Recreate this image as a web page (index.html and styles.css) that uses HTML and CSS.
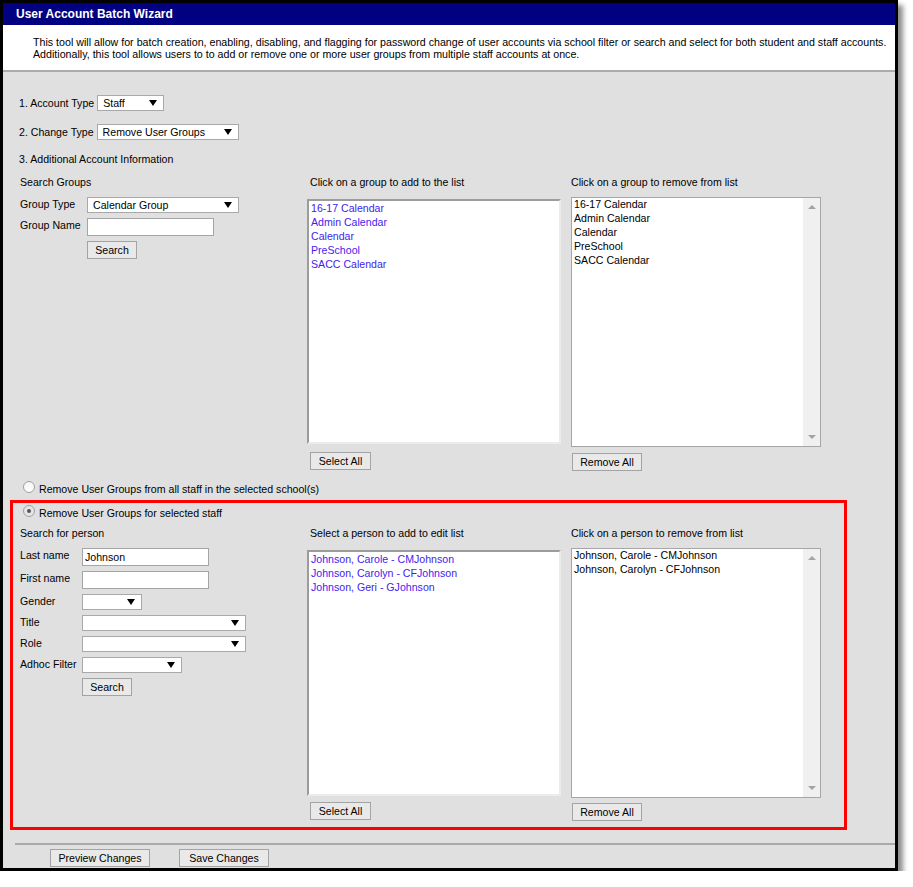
FILE: index.html
```html
<!DOCTYPE html>
<html>
<head>
<meta charset="utf-8">
<link rel="stylesheet" href="styles.css">
</head>
<body>
<div class="frame">
  <div class="titlebar">User Account Batch Wizard</div>
  <div class="desc">This tool will allow for batch creation, enabling, disabling, and flagging for password change of user accounts via school filter or search and select for both student and staff accounts.<br>Additionally, this tool allows users to to add or remove one or more user groups from multiple staff accounts at once.</div>
  <div class="main">
    <div class="row r1"><span class="rlbl">1. Account Type</span><div class="sel w-acct">Staff<span class="arr"></span></div></div>
    <div class="row r2"><span class="rlbl">2. Change Type</span><div class="sel w-change">Remove User Groups<span class="arr"></span></div></div>
    <div class="row r3">3. Additional Account Information</div>

    <div class="cols groups">
      <div class="c1">
        <div class="head">Search Groups</div>
        <div class="field f-first"><span class="flbl gl">Group Type</span><div class="sel w-gtype">Calendar Group<span class="arr"></span></div></div>
        <div class="field f-next"><span class="flbl gl">Group Name</span><div class="inp w-gname"></div></div>
        <div class="btnrow g-btn"><button class="btn w-search">Search</button></div>
      </div>
      <div class="c2">
        <div class="head">Click on a group to add to the list</div>
        <div class="list inset glist">
          <div class="item">16-17 Calendar</div>
          <div class="item">Admin Calendar</div>
          <div class="item">Calendar</div>
          <div class="item">PreSchool</div>
          <div class="item">SACC Calendar</div>
        </div>
        <button class="btn w-selall sel-btn">Select All</button>
      </div>
      <div class="c3">
        <div class="head">Click on a group to remove from list</div>
        <div class="list plain">
          <div class="items">
            <div class="item">16-17 Calendar</div>
            <div class="item">Admin Calendar</div>
            <div class="item">Calendar</div>
            <div class="item">PreSchool</div>
            <div class="item">SACC Calendar</div>
          </div>
          <div class="track"><span class="up"></span><span class="down"></span></div>
        </div>
        <button class="btn w-remall rem-btn">Remove All</button>
      </div>
    </div>

    <div class="radiorow rr-all"><span class="radio"></span><span>Remove User Groups from all staff in the selected school(s)</span></div>

    <div class="redbox">
      <div class="radiorow rr-sel"><span class="radio on"></span><span>Remove User Groups for selected staff</span></div>
      <div class="cols persons">
        <div class="c1">
          <div class="head">Search for person</div>
          <div class="field f-first"><span class="flbl pl">Last name</span><div class="inp w-name">Johnson</div></div>
          <div class="field f-p"><span class="flbl pl">First name</span><div class="inp w-name"></div></div>
          <div class="field f-p"><span class="flbl pl">Gender</span><div class="sel w-gender"><span class="arr"></span></div></div>
          <div class="field f-p"><span class="flbl pl">Title</span><div class="sel w-title"><span class="arr"></span></div></div>
          <div class="field f-p"><span class="flbl pl">Role</span><div class="sel w-title"><span class="arr"></span></div></div>
          <div class="field f-p"><span class="flbl pl">Adhoc Filter</span><div class="sel w-adhoc"><span class="arr"></span></div></div>
          <div class="btnrow p-btn"><button class="btn w-search">Search</button></div>
        </div>
        <div class="c2">
          <div class="head">Select a person to add to edit list</div>
          <div class="list inset plist">
            <div class="item">Johnson, Carole - CMJohnson</div>
            <div class="item">Johnson, Carolyn - CFJohnson</div>
            <div class="item">Johnson, Geri - GJohnson</div>
          </div>
          <button class="btn w-selall psel-btn">Select All</button>
        </div>
        <div class="c3">
          <div class="head">Click on a person to remove from list</div>
          <div class="list plain">
            <div class="items">
              <div class="item">Johnson, Carole - CMJohnson</div>
              <div class="item">Johnson, Carolyn - CFJohnson</div>
            </div>
            <div class="track"><span class="up"></span><span class="down"></span></div>
          </div>
          <button class="btn w-remall prem-btn">Remove All</button>
        </div>
      </div>
    </div>

    <div class="footer">
      <button class="btn w-preview">Preview Changes</button>
      <button class="btn w-save">Save Changes</button>
    </div>
  </div>
</div>
</body>
</html>
```

FILE: styles.css
```css
html, body {
  margin: 0;
  padding: 0;
  background: #ffffff;
}
body {
  font-family: "Liberation Sans", Arial, sans-serif;
  font-size: 10.6px;
  color: #000;
}
.frame {
  box-sizing: border-box;
  width: 898px;
  height: 871px;
  border: 3px solid #000;
  background: #e0e0e0;
  box-shadow: 5px 5px 5px rgba(0, 0, 0, 0.45);
  overflow: hidden;
}
.titlebar {
  height: 22px;
  line-height: 22px;
  background: #000080;
  color: #fff;
  font-weight: bold;
  font-size: 12px;
  padding-left: 13px;
}
.desc {
  box-sizing: border-box;
  height: 47px;
  background: #fff;
  padding: 11px 0 0 30px;
  line-height: 12px;
  font-size: 10.66px;
  border-bottom: 2px solid #ababab;
}
.main {
  display: flex;
  flex-direction: column;
}
.row {
  display: flex;
  align-items: center;
  padding-left: 16px;
}
.rlbl { margin-right: 3px; }
.r1 { margin-top: 23px; }
.r2 { margin-top: 13px; }
.r3 { margin-top: 12px; line-height: 14px; }

.sel {
  box-sizing: border-box;
  position: relative;
  height: 16px;
  line-height: 14px;
  background: #fff;
  border: 1px solid #a9a9a9;
  padding-left: 5px;
  white-space: nowrap;
}
.arr {
  position: absolute;
  right: 6px;
  top: 4px;
  width: 0;
  height: 0;
  border-left: 4px solid transparent;
  border-right: 4px solid transparent;
  border-top: 6px solid #000;
}
.w-acct { width: 67px; }
.w-change { width: 142px; }
.w-gtype { width: 152px; }
.w-gender { width: 60px; }
.w-title { width: 164px; }
.w-adhoc { width: 100px; }

.inp {
  box-sizing: border-box;
  height: 18px;
  line-height: 16px;
  background: #fff;
  border: 1px solid #a5a5a5;
  padding-left: 2px;
}
.w-gname { width: 127px; }
.w-name { width: 127px; }

.cols {
  display: flex;
  padding-left: 17px;
}
.groups { margin-top: 9px; }
.c1 { width: 287px; display: flex; flex-direction: column; }
.c2 { width: 264px; display: flex; flex-direction: column; align-items: flex-start; }
.c3 { width: 260px; display: flex; flex-direction: column; align-items: flex-start; }
.head { line-height: 14px; height: 14px; }
.groups .c2 .head { padding-left: 3px; }
.persons .c2 .head { padding-left: 3px; }

.field {
  display: flex;
  align-items: flex-start;
}
.flbl { line-height: 14px; }
.gl { width: 67px; }
.pl { width: 62px; }
.groups .f-first { margin-top: 8px; }
.groups .f-first .flbl { line-height: 14px; }
.groups .f-next { margin-top: 5px; }
.g-btn { margin-top: 5px; padding-left: 67px; display: flex; }
.persons .f-first { margin-top: 8px; }
.f-p { margin-top: 5px; }
.p-btn { margin-top: 5px; padding-left: 62px; display: flex; }

.btn {
  box-sizing: border-box;
  height: 18px;
  padding: 0;
  font-family: "Liberation Sans", Arial, sans-serif;
  font-size: 10.6px;
  color: #000;
  background: #e9e9e9;
  border: 1px solid #a3a3a3;
  border-radius: 0;
}
.w-search { width: 50px; }
.w-selall { width: 61px; }
.w-remall { width: 70px; }
.w-preview { width: 100px; }
.w-save { width: 90px; }

.list {
  box-sizing: border-box;
  background: #fff;
}
.inset {
  width: 254px;
  border-style: solid;
  border-width: 2px;
  border-color: #9c9c9c #ececec #ececec #9c9c9c;
  padding-left: 2px;
}
.glist { margin-top: 10px; height: 245px; }
.plist { margin-top: 10px; height: 246px; }
.item { line-height: 14px; height: 14px; white-space: nowrap; }
.inset .item { color: #4422ee; }

.plain {
  width: 250px;
  height: 250px;
  margin-top: 8px;
  border: 1px solid #a6a6a6;
  display: flex;
}
.items { flex: 1; padding-left: 2px; margin-top: -1px; }
.track {
  position: relative;
  width: 17px;
  background: #f0f0f0;
}
.up, .down {
  position: absolute;
  left: 5px;
  width: 0;
  height: 0;
  border-left: 4px solid transparent;
  border-right: 4px solid transparent;
}
.up { top: 7px; border-bottom: 4px solid #a3a3a3; }
.down { bottom: 7px; border-top: 4px solid #a3a3a3; }

.sel-btn { margin-top: 8px; margin-left: 3px; }
.rem-btn { margin-top: 6px; margin-left: 1px; }
.psel-btn { margin-top: 6px; margin-left: 3px; }
.prem-btn { margin-top: 5px; margin-left: 1px; }

.radiorow {
  display: flex;
  align-items: center;
  line-height: 14px;
}
.rr-all { margin-top: 11px; padding-left: 20px; }
.rr-sel { margin-top: 3px; padding-left: 7px; }
.radio {
  box-sizing: border-box;
  width: 12px;
  height: 12px;
  border-radius: 50%;
  border: 1px solid #a0a0a0;
  background: linear-gradient(#f4f4f4, #ffffff);
  margin-right: 4px;
  position: relative;
  top: -2px;
}
.radio.on {
  background: #e6e6e6;
}
.radio.on::after {
  content: "";
  position: absolute;
  left: 3px;
  top: 3px;
  width: 4px;
  height: 4px;
  border-radius: 50%;
  background: #555;
}

.redbox {
  box-sizing: border-box;
  width: 837px;
  margin-top: 4px;
  margin-left: 7px;
  border: 3px solid #ff0000;
  padding-bottom: 6px;
}
.redbox .radiorow { padding-left: 10px; }
.persons { margin-top: 6px; padding-left: 7px; }

.footer {
  margin-top: 13px;
  margin-left: 12px;
  border-top: 2px solid #aaaaaa;
  padding-top: 4px;
  padding-left: 35px;
  display: flex;
  gap: 29px;
}
```
